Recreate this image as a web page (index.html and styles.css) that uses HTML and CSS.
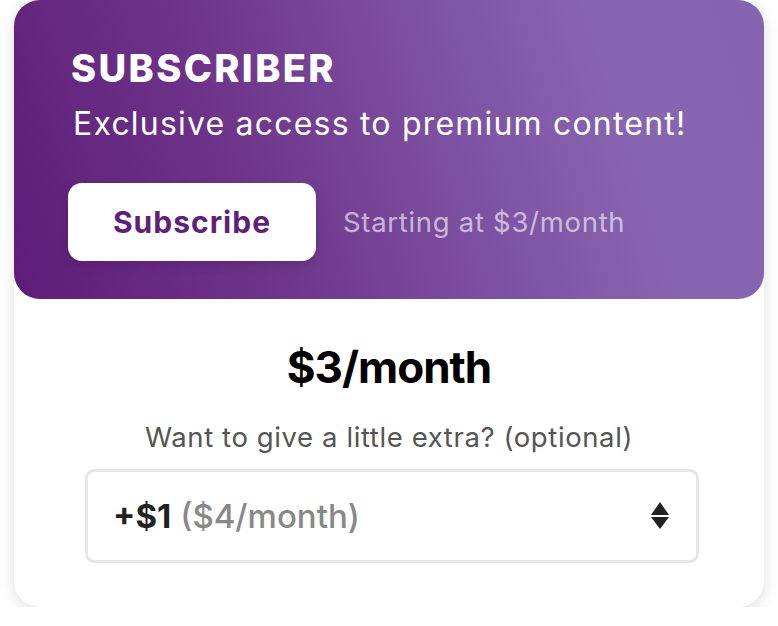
FILE: index.html
```html
<!DOCTYPE html>
<html lang="en">
<head>
<meta charset="UTF-8">
<meta name="viewport" content="width=device-width, initial-scale=1.0">
<title>Subscriber</title>
<link rel="stylesheet" href="styles.css">
</head>
<body>
<div class="card">
    <div class="hero">
        <h1 class="tier">SUBSCRIBER</h1>
        <p class="tagline">Exclusive access to premium content!</p>
        <div class="actions">
            <button class="subscribe">Subscribe</button>
            <span class="starting">Starting at $3/month</span>
        </div>
    </div>
    <div class="details">
        <div class="price">$3/month</div>
        <div class="extra-label">Want to give a little extra? (optional)</div>
        <div class="select">
            <span class="amount">+$1</span>
            <span class="total">($4/month)</span>
            <svg class="arrows" width="18" height="28" viewBox="0 0 18 28">
                <path d="M9 0 L18 13 L0 13 Z" fill="#222"/>
                <path d="M0 15 L18 15 L9 27 Z" fill="#222"/>
            </svg>
        </div>
    </div>
</div>
</body>
</html>
```

FILE: styles.css
```css
body {
    margin: 0;
    background: #fff;
    font-family: Inter, "Noto Sans", sans-serif;
}
.card {
    width: 750px;
    margin-left: 14px;
    height: 607px;
    background: #fff;
    border-radius: 26px;
    box-shadow: 0 4px 16px rgba(0, 0, 0, 0.13);
}
.hero {
    height: 299px;
    box-sizing: border-box;
    padding: 45px 0 0 57px;
    border-radius: 26px;
    background: linear-gradient(72deg, #5e1c77 0%, #6d3389 30%, #7d51a2 58%, #8865b1 80%, #8563ae 100%);
    color: #fff;
}
.tier {
    margin: 0;
    font-size: 38px;
    font-weight: 800;
    letter-spacing: 2.4px;
    line-height: 46px;
}
.tagline {
    margin: 13px 0 0 2px;
    font-size: 32px;
    letter-spacing: 1.2px;
    line-height: 40px;
}
.actions {
    display: flex;
    align-items: center;
    margin-top: 39px;
    margin-left: -3px;
}
.subscribe {
    width: 248px;
    height: 78px;
    border: none;
    border-radius: 14px;
    background: #fff;
    color: #5f1f7a;
    font-family: inherit;
    font-size: 30px;
    font-weight: 700;
    letter-spacing: 1px;
    box-shadow: 0 4px 10px rgba(40, 0, 60, 0.2);
}
.starting {
    margin-left: 27px;
    font-size: 27.5px;
    letter-spacing: 0.7px;
    color: rgba(255, 255, 255, 0.62);
}
.details {
    display: flex;
    flex-direction: column;
    align-items: center;
    padding-top: 40px;
}
.price {
    font-size: 44px;
    font-weight: 700;
    letter-spacing: -1px;
    color: #000;
    line-height: 56px;
}
.extra-label {
    margin-top: 26px;
    font-size: 27.5px;
    letter-spacing: 0.6px;
    color: #555;
    line-height: 32px;
}
.select {
    margin-top: 16px;
    margin-left: 6px;
    width: 614px;
    height: 94px;
    box-sizing: border-box;
    border: 3px solid #e5e7eb;
    border-radius: 9px;
    display: flex;
    align-items: center;
    padding: 0 27px 0 25px;
    font-size: 33px;
}
.amount {
    font-weight: 700;
    color: #222;
}
.total {
    margin-left: 9px;
    color: #888;
    font-weight: 500;
}
.arrows {
    margin-left: auto;
}
```
